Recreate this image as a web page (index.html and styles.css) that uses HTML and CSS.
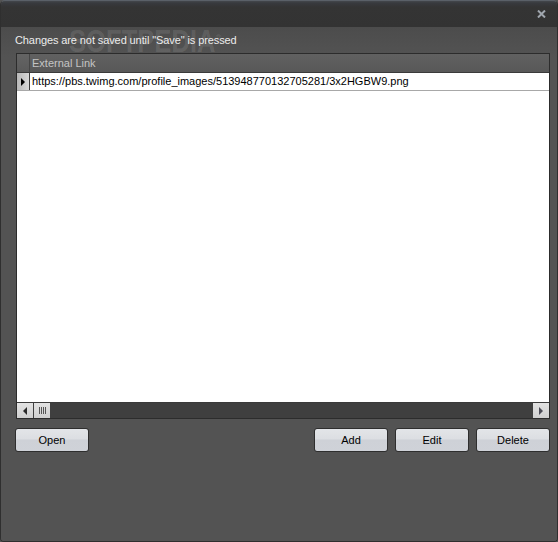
FILE: index.html
```html
<!DOCTYPE html>
<html>
<head>
<meta charset="utf-8">
<link rel="stylesheet" href="styles.css">
</head>
<body>
<div class="window">
  <div class="titlebar">
    <span class="close" aria-label="close">
      <svg width="9" height="8" viewBox="0 0 9 8"><path d="M1 0.5 L8 7.5 M8 0.5 L1 7.5" stroke="#a0a6ae" stroke-width="2"/></svg>
    </span>
  </div>
  <div class="body">
    <div class="watermark">SOFTPEDIA<sup>®</sup></div>
    <div class="notice">Changes are not saved until "Save" is pressed</div>
    <div class="grid">
      <div class="header">
        <div class="sel-head"></div>
        <div class="col-head">External Link</div>
      </div>
      <div class="row">
        <div class="sel-cell"><span class="arrow"></span></div>
        <div class="cell">https://pbs.twimg.com/profile_images/513948770132705281/3x2HGBW9.png</div>
      </div>
      <div class="empty"></div>
      <div class="hscroll">
        <div class="sbtn"><span class="tri-left"></span></div>
        <div class="thumb"><span></span><span></span><span></span><span></span></div>
        <div class="track"></div>
        <div class="sbtn"><span class="tri-right"></span></div>
      </div>
    </div>
    <div class="buttons">
      <button class="btn">Open</button>
      <div class="spacer"></div>
      <button class="btn">Add</button>
      <button class="btn">Edit</button>
      <button class="btn">Delete</button>
    </div>
  </div>
</div>
</body>
</html>
```
FILE: styles.css
```css
html, body {
  margin: 0;
  padding: 0;
  background: #535353;
}
.window {
  width: 558px;
  height: 542px;
  box-sizing: border-box;
  background: #535353;
  border: 1px solid #2f2f2f;
  border-top: 1px solid #5a6068;
  border-radius: 5px 5px 4px 4px;
  display: flex;
  flex-direction: column;
  overflow: hidden;
  font-family: "Liberation Sans", Arial, sans-serif;
  font-size: 11px;
}
.titlebar {
  height: 26px;
  background: linear-gradient(#44474d 0px, #383a3e 2px, #343434 6px, #333333 100%);
  display: flex;
  justify-content: flex-end;
  align-items: flex-start;
  flex-shrink: 0;
}
.close {
  margin-top: 9px;
  margin-right: 11px;
  width: 9px;
  height: 8px;
  display: flex;
}
.body {
  position: relative;
  flex: 1;
  background: linear-gradient(#4c4c4c 0px, #535353 30px, #535353 100%);
  display: flex;
  flex-direction: column;
  padding: 0 7px 0 14px;
}
.watermark {
  position: absolute;
  left: 68px;
  top: -2px;
  font-family: "Liberation Sans", Arial, sans-serif;
  font-weight: bold;
  font-size: 32px;
  line-height: 32px;
  letter-spacing: 0px;
  color: rgba(255,255,255,0.11);
  transform: scaleX(0.8);
  transform-origin: left top;
  pointer-events: none;
  z-index: 0;
}
.watermark sup {
  font-size: 10px;
  vertical-align: top;
  position: relative;
  top: -2px;
}
.notice {
  position: relative;
  color: #ececec;
  margin-top: 6px;
  height: 14px;
  line-height: 14px;
  margin-bottom: 6px;
  letter-spacing: -0.1px;
}
.grid {
  position: relative;
  margin-left: 1px;
  height: 366px;
  box-sizing: border-box;
  border: 1px solid #2c2c2c;
  display: flex;
  flex-direction: column;
  background: #ffffff;
}
.header {
  height: 18px;
  display: flex;
  background: linear-gradient(#616161, #585858);
  border-bottom: 1px solid #3a3a3a;
  flex-shrink: 0;
}
.sel-head {
  width: 12px;
  border-right: 1px solid #454545;
  background: linear-gradient(#646464, #5a5a5a);
}
.col-head {
  color: #c4c4c4;
  padding-left: 2px;
  line-height: 18px;
}
.row {
  height: 17px;
  display: flex;
  border-bottom: 1px solid #a8a8a8;
  flex-shrink: 0;
}
.sel-cell {
  width: 12px;
  border-right: 1px solid #3c3c3c;
  background: linear-gradient(90deg, #b8b8b8, #d8d8d8);
  display: flex;
  align-items: center;
  justify-content: center;
}
.arrow {
  width: 0;
  height: 0;
  border-top: 4px solid transparent;
  border-bottom: 4px solid transparent;
  border-left: 4px solid #000;
}
.cell {
  color: #000;
  padding-left: 2px;
  line-height: 17px;
  white-space: nowrap;
}
.empty {
  flex: 1;
  background: #fff;
}
.hscroll {
  height: 15px;
  display: flex;
  background: #3f3f3f;
  border-top: 1px solid #3a3a3a;
  flex-shrink: 0;
}
.sbtn {
  width: 16px;
  background: linear-gradient(#e2e2e2, #cfcfcf);
  display: flex;
  align-items: center;
  justify-content: center;
}
.tri-left {
  width: 0; height: 0;
  border-top: 4px solid transparent;
  border-bottom: 4px solid transparent;
  border-right: 4px solid #2a2a2a;
}
.tri-right {
  width: 0; height: 0;
  border-top: 4px solid transparent;
  border-bottom: 4px solid transparent;
  border-left: 4px solid #4a4a55;
}
.thumb {
  width: 16px;
  margin-left: 1px;
  background: linear-gradient(#e2e2e2, #cfcfcf);
  display: flex;
  align-items: center;
  justify-content: center;
  gap: 1px;
}
.thumb span {
  width: 1px;
  height: 7px;
  background: #555;
}
.track {
  flex: 1;
}
.buttons {
  margin-top: 9px;
  display: flex;
  gap: 7px;
  padding-right: 0;
}
.spacer {
  flex: 1;
}
.btn {
  width: 74px;
  height: 24px;
  box-sizing: border-box;
  border: 1px solid #2e2e2e;
  border-radius: 3px;
  background: linear-gradient(#e3e5e8 0%, #dcdee2 45%, #ced1d7 50%, #cfd2d8 100%);
  font-family: "Liberation Sans", Arial, sans-serif;
  font-size: 11px;
  color: #000;
  padding: 0;
  margin: 0;
}
```
